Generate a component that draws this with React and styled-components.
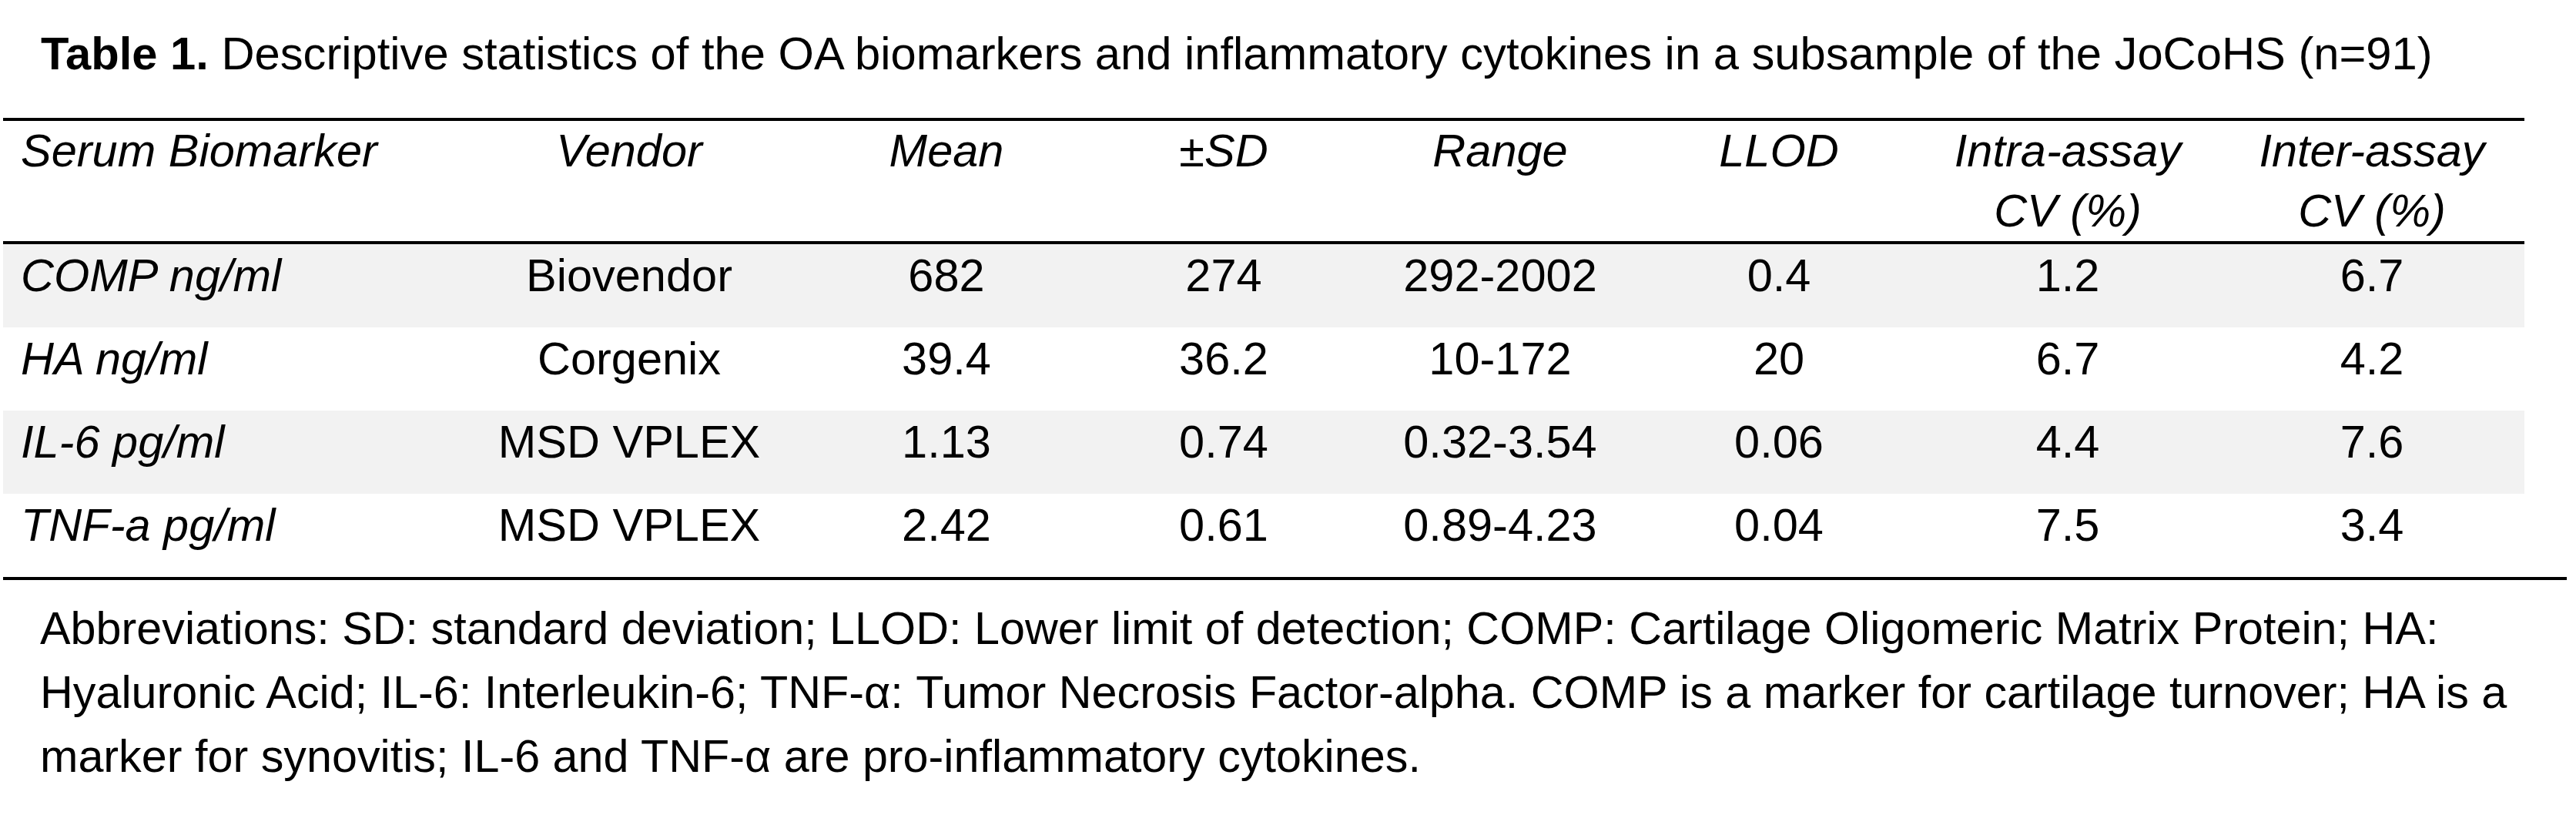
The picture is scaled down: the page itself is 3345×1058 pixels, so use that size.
import React from 'react';
import styled, { createGlobalStyle } from 'styled-components';

const GlobalStyle = createGlobalStyle`
  body {
    margin: 0;
    background: #ffffff;
    color: #000000;
    font-family: "Liberation Sans", Arial, Helvetica, sans-serif;
  }
`;

const COLUMNS = '596px 434px 390px 330px 388px 336px 414px 1fr';

const Page = styled.div`
  padding-top: 31px;
`;

const Caption = styled.p`
  margin: 0;
  padding-left: 53px;
  font-size: 59.7px;
  line-height: 78px;
  white-space: nowrap;

  b {
    font-weight: 700;
  }
`;

const Table = styled.div`
  margin: 44px 0 0 4px;
  width: 3274px;
  border-top: 4px solid #000;
`;

const HeadRow = styled.div`
  display: grid;
  grid-template-columns: ${COLUMNS};
  height: 156px;
  border-bottom: 4px solid #000;
  box-sizing: content-box;
`;

const Row = styled.div`
  display: grid;
  grid-template-columns: ${COLUMNS};
  height: 108px;
  background: ${(p) => (p.$shade ? '#f2f2f2' : 'transparent')};
`;

const Cell = styled.div`
  font-size: 59.5px;
  line-height: ${(p) => (p.$head ? '78px' : '82px')};
  font-style: ${(p) => (p.$italic ? 'italic' : 'normal')};
  text-align: ${(p) => (p.$first ? 'left' : 'center')};
  padding-left: ${(p) => (p.$first ? '23px' : '0')};
  padding-right: ${(p) => (p.$last ? '10px' : '0')};
  white-space: nowrap;
`;

const BottomRule = styled.div`
  margin-left: 4px;
  width: 3329px;
  height: 4px;
  background: #000;
`;

const Note = styled.p`
  margin: 21px 0 0;
  padding-left: 52px;
  font-size: 59.3px;
  line-height: 83px;
  white-space: nowrap;
`;

const headers = [
  ['Serum Biomarker'],
  ['Vendor'],
  ['Mean'],
  ['±SD'],
  ['Range'],
  ['LLOD'],
  ['Intra-assay', 'CV (%)'],
  ['Inter-assay', 'CV (%)'],
];

const rows = [
  ['COMP ng/ml', 'Biovendor', '682', '274', '292-2002', '0.4', '1.2', '6.7'],
  ['HA ng/ml', 'Corgenix', '39.4', '36.2', '10-172', '20', '6.7', '4.2'],
  ['IL-6 pg/ml', 'MSD VPLEX', '1.13', '0.74', '0.32-3.54', '0.06', '4.4', '7.6'],
  ['TNF-a pg/ml', 'MSD VPLEX', '2.42', '0.61', '0.89-4.23', '0.04', '7.5', '3.4'],
];

const App = () => (
  <Page>
    <GlobalStyle />
    <Caption>
      <b>Table 1.</b> Descriptive statistics of the OA biomarkers and inflammatory cytokines in a subsample of the JoCoHS (n=91)
    </Caption>
    <Table>
      <HeadRow>
        {headers.map((lines, i) => (
          <Cell key={i} $head $italic $first={i === 0} $last={i === headers.length - 1}>
            {lines.map((line, j) => (
              <div key={j}>{line}</div>
            ))}
          </Cell>
        ))}
      </HeadRow>
      {rows.map((row, r) => (
        <Row key={r} $shade={r % 2 === 0}>
          {row.map((value, i) => (
            <Cell key={i} $italic={i === 0} $first={i === 0} $last={i === row.length - 1}>
              {value}
            </Cell>
          ))}
        </Row>
      ))}
    </Table>
    <BottomRule />
    <Note>
      Abbreviations: SD: standard deviation; LLOD: Lower limit of detection; COMP: Cartilage Oligomeric Matrix Protein; HA:
      <br />
      Hyaluronic Acid; IL-6: Interleukin-6; TNF-α: Tumor Necrosis Factor-alpha. COMP is a marker for cartilage turnover; HA is a
      <br />
      marker for synovitis; IL-6 and TNF-α are pro-inflammatory cytokines.
    </Note>
  </Page>
);

export default App;
